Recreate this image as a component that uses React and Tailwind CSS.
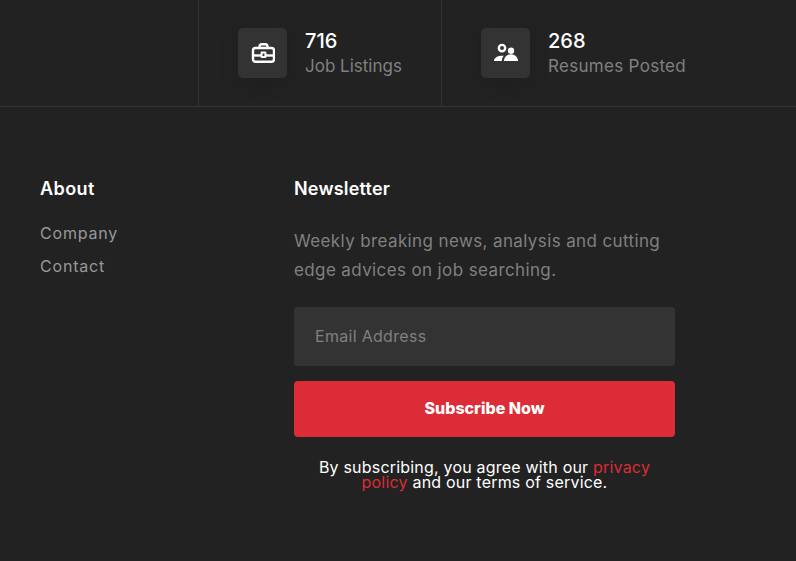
import React from "react";

function Briefcase() {
  return (
    <svg width="24" height="24" viewBox="0 0 24 24" fill="none" stroke="white" strokeWidth="2.4" strokeLinejoin="round">
      <rect x="2" y="7" width="21" height="13.8" rx="2.5" />
      <path d="M8.5 7V5.5A2.3 2.3 0 0 1 10.8 3.2h3.4A2.3 2.3 0 0 1 16.5 5.5V7" />
      <path d="M2 14.5H23" />
      <rect x="10.6" y="11.5" width="3.8" height="4.4" fill="#333" strokeWidth="2" />
    </svg>
  );
}

function People() {
  return (
    <svg width="24" height="24" viewBox="0 0 24 24" fill="white">
      <path fillRule="evenodd" d="M8 2.7a4.4 4.4 0 1 1 0 8.8 4.4 4.4 0 0 1 0-8.8Zm0 2.4a2 2 0 1 0 0 4 2 2 0 0 0 0-4Z" />
      <circle cx="17" cy="9.7" r="3.2" />
      <path d="M0 20c0-2.8 3-4.8 7-5.2 1-.1 2-.1 2.8 0C8.6 16 8 17.6 7.8 20Z" />
      <path d="M10 20c0-3.8 3-6.8 7-6.8s7 3 7 6.8Z" />
    </svg>
  );
}

function Stat({ icon, value, label, border, tracking }) {
  return (
    <div className={`flex items-center gap-[18px] h-full pl-[39px] border-l border-[#333333] ${border ? "w-[243px]" : "flex-1"}`}>
      <div className="w-[49px] h-[50px] rounded-[5px] bg-[#333333] flex items-center justify-center shadow-[0_5px_20px_rgba(0,0,0,0.12)]">
        {icon}
      </div>
      <div>
        <div className="text-[20px] leading-[26px] font-medium text-white">{value}</div>
        <div className={`text-[17px] leading-[25px] text-[#808080] ${tracking}`}>{label}</div>
      </div>
    </div>
  );
}

export default function App() {
  return (
    <div className="w-[796px] h-[561px] overflow-hidden bg-[#222222] font-['Inter','Liberation_Sans',sans-serif]">
      <div className="flex h-[107px] border-b border-[#333333]">
        <div className="w-[198px]" />
        <Stat border icon={<Briefcase />} value="716" label="Job Listings" tracking="tracking-normal" />
        <Stat icon={<People />} value="268" label="Resumes Posted" tracking="tracking-[0.3px]" />
      </div>
      <div className="flex pl-[40px] pt-[69px]">
        <div className="w-[254px]">
          <h3 className="text-[18px] leading-[26px] font-semibold text-white tracking-[0.4px]">About</h3>
          <ul className="mt-[19px] flex flex-col gap-[8px] text-[16px] leading-[25px] text-[#999999] tracking-[0.8px]">
            <li>Company</li>
            <li>Contact</li>
          </ul>
        </div>
        <div className="w-[381px]">
          <h3 className="text-[18px] leading-[26px] font-semibold text-white tracking-[0.2px]">Newsletter</h3>
          <p className="mt-[25px] text-[17px] leading-[29px] text-[#808080] tracking-[0.38px]">
            Weekly breaking news, analysis and cutting edge advices on job searching.
          </p>
          <div className="mt-[22px] h-[59px] rounded-[3px] bg-[#333333] pl-[21px] pb-[2px] flex items-center text-[16px] text-[#808080] tracking-[0.3px]">
            Email Address
          </div>
          <button className="mt-[15px] w-full h-[56px] pb-[2px] rounded-[4px] bg-[#dc2c37] text-white text-[16px] font-extrabold">
            Subscribe Now
          </button>
          <p className="mt-[23px] text-center text-[16px] leading-[15px] text-white px-[20px] tracking-[0.2px]">
            By subscribing, you agree with our <span className="text-[#dc2c37]">privacy policy</span> and our terms of service.
          </p>
        </div>
      </div>
    </div>
  );
}
